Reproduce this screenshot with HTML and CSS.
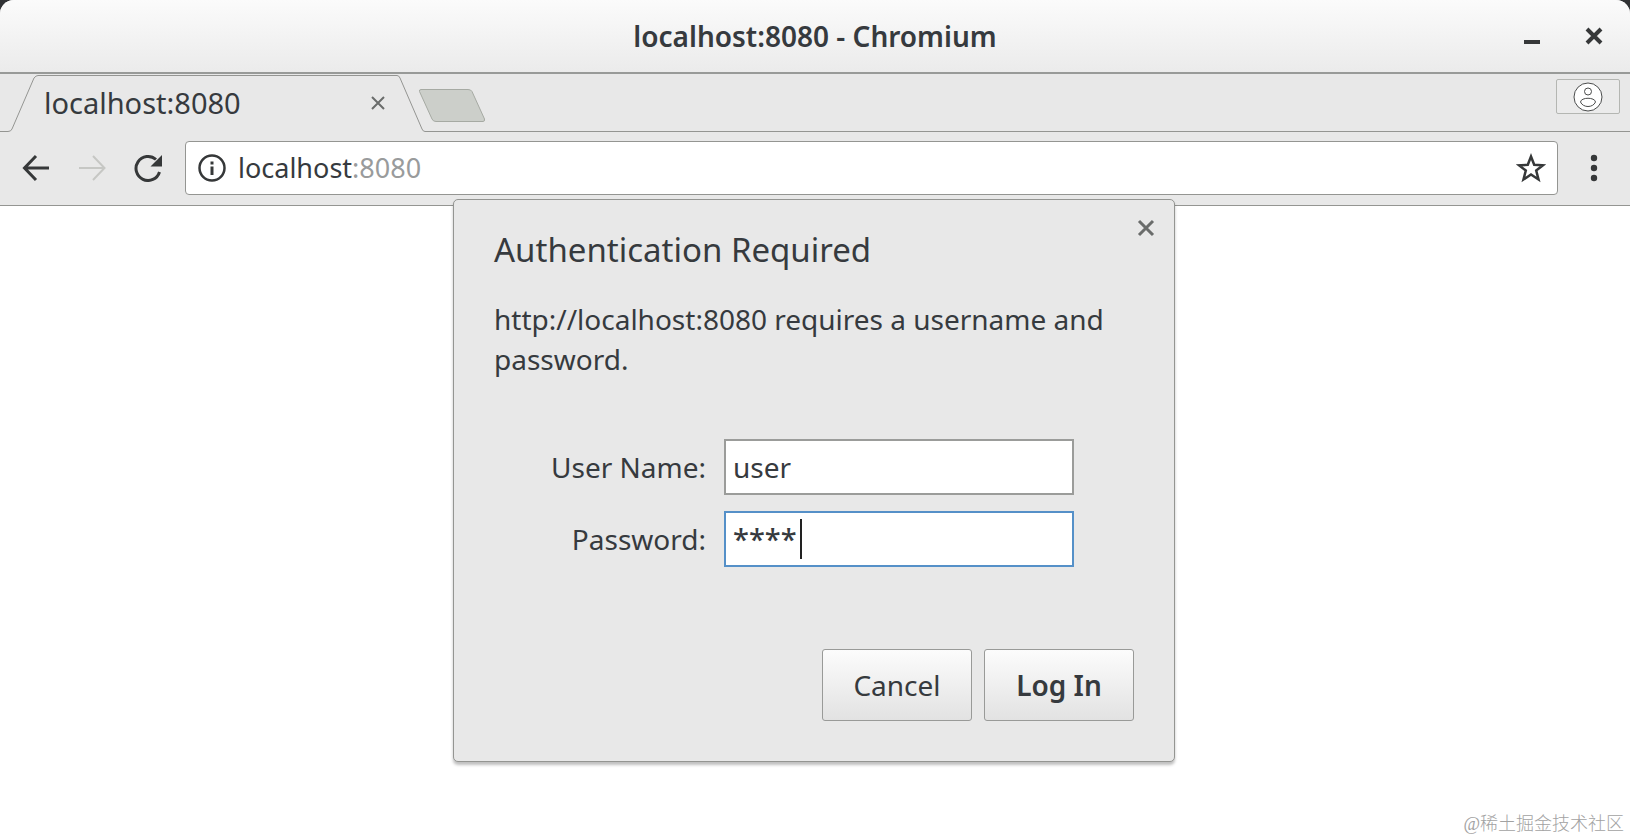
FILE: index.html
```html
<!DOCTYPE html>
<html lang="en">
<head>
<meta charset="utf-8">
<title>localhost:8080 - Chromium</title>
<link rel="stylesheet" href="styles.css">
</head>
<body>
<div class="window">
  <header class="titlebar">
    <h1 class="window-title">localhost:8080 - Chromium</h1>
    <div class="window-controls">
      <button class="icon-button" type="button" aria-label="Minimize">
        <svg width="24" height="24" viewBox="0 0 24 24"><rect x="4" y="16" width="16" height="4" fill="#363839"/></svg>
      </button>
      <button class="icon-button" type="button" aria-label="Close window">
        <svg width="24" height="24" viewBox="0 0 24 24"><path d="M5 5l14 14M19 5L5 19" fill="none" stroke="#363839" stroke-width="4"/></svg>
      </button>
    </div>
  </header>

  <nav class="tabstrip" aria-label="Tabs">
    <div class="tab">
      <svg class="tab-edge" width="38" height="58" viewBox="0 0 38 58"><path d="M0 57.500H8Q11 57.500 12 55L34 4Q36 1.500 38 1.500" fill="none" stroke="#949592" stroke-width="1"/></svg>
      <div class="tab-body">
        <span class="tab-title">localhost:8080</span>
        <button class="icon-button" type="button" aria-label="Close tab">
          <svg width="20" height="20" viewBox="0 0 20 20"><path d="M4 4l12 12M16 4L4 16" fill="none" stroke="#6a6c6b" stroke-width="2"/></svg>
        </button>
      </div>
      <svg class="tab-edge" width="28" height="58" viewBox="0 0 28 58"><path d="M0 1.500Q2 1.500 3 4L25 55Q26 57.500 28 57.500" fill="none" stroke="#949592" stroke-width="1"/></svg>
    </div>
    <div class="strip-rest">
      <button class="icon-button new-tab" type="button" aria-label="New tab">
        <svg width="68" height="34" viewBox="0 0 68 34"><path d="M3 1.500H50Q53 1.500 54 3.500L66.500 31Q67 33.500 65 33.500H18Q15 33.500 14 31L1.500 3.500Q1 1.500 3 1.500Z" fill="#cccfca" stroke="#a6aaa3"/></svg>
      </button>
      <button class="profile" type="button" aria-label="Profile">
        <svg width="30" height="30" viewBox="0 0 30 30" fill="none" stroke="#4a4c4c"><circle cx="15" cy="15" r="14" fill="#fff"/><circle cx="15" cy="9.500" r="3.500"/><path d="M7.500 20C8 15 22 15 22.500 20C20 26 10 26 7.500 20Z"/></svg>
      </button>
    </div>
  </nav>

  <div class="toolbar">
    <button class="icon-button" type="button" aria-label="Back">
      <svg width="28" height="28" viewBox="0 0 28 28"><path d="M27 14H3M14 2L2.500 14L14 26" fill="none" stroke="#363839" stroke-width="3"/></svg>
    </button>
    <button class="icon-button" type="button" aria-label="Forward" disabled>
      <svg width="28" height="28" viewBox="0 0 28 28"><path d="M1 14H26M15 2L26.500 14L15 26" fill="none" stroke="#c6c7c4" stroke-width="2"/></svg>
    </button>
    <button class="icon-button" type="button" aria-label="Reload">
      <svg width="28" height="28" viewBox="0 0 28 28"><path d="M25.500 18A12 12 0 1 1 22 5.500" fill="none" stroke="#363839" stroke-width="3"/><path d="M28 1V12.500H16.500Z" fill="#363839"/></svg>
    </button>
    <div class="omnibox">
      <svg width="28" height="28" viewBox="0 0 28 28"><circle cx="14" cy="14" r="12.500" fill="none" stroke="#363839" stroke-width="2.500"/><path d="M12.500 7.500h3v3h-3zM12.500 12.500h3v8.500h-3z" fill="#363839"/></svg>
      <div class="address" role="textbox" aria-label="Address">localhost<span class="port">:8080</span></div>
      <button class="icon-button" type="button" aria-label="Bookmark this page">
        <svg width="30" height="30" viewBox="0 0 30 30"><path d="M15 3.500L18.200 11.800L27 12.300L20.200 17.600L22.500 26.500L15 21.500L7.500 26.500L9.800 17.600L3 12.300L11.800 11.800Z" fill="none" stroke="#363839" stroke-width="2.500"/></svg>
      </button>
    </div>
    <button class="icon-button menu" type="button" aria-label="Menu">
      <svg width="8" height="28" viewBox="0 0 8 28" fill="#363839"><circle cx="4" cy="4" r="3.200"/><circle cx="4" cy="14" r="3.200"/><circle cx="4" cy="24" r="3.200"/></svg>
    </button>
  </div>

  <main class="page">
    <form class="dialog" role="dialog" aria-labelledby="dialog-title">
      <div class="dialog-head">
        <h2 class="dialog-title" id="dialog-title">Authentication Required</h2>
        <button class="icon-button" type="button" aria-label="Close dialog">
          <svg width="20" height="20" viewBox="0 0 20 20"><path d="M3 3l14 14M17 3L3 17" fill="none" stroke="#6a6c6b" stroke-width="3"/></svg>
        </button>
      </div>
      <p class="message">http://localhost:8080 requires a username and password.</p>
      <div class="fields">
        <label for="username">User Name:</label>
        <div class="field"><input id="username" type="text" value="user"></div>
        <label for="password">Password:</label>
        <div class="field focused"><input class="secret" id="password" type="text" value="****" autocomplete="off"><span class="caret"></span></div>
      </div>
      <div class="actions">
        <button class="action" type="button">Cancel</button>
        <button class="action primary" type="submit">Log In</button>
      </div>
    </form>
    <div class="watermark" lang="zh-CN">@稀土掘金技术社区</div>
  </main>
</div>
</body>
</html>
```

FILE: styles.css
```css
* {
  box-sizing: border-box;
}

body {
  margin: 0;
  background: #303234;
  color: #363a3e;
  font-family: "Noto Sans", "Open Sans", sans-serif;
  font-size: 28px;
  line-height: 40px;
}

button,
input {
  color: inherit;
  font: inherit;
}

svg {
  display: block;
}

.window {
  display: flex;
  flex-direction: column;
  min-height: 100vh;
  overflow: hidden;
  border-radius: 14px 14px 0 0;
  background: #e8e8e8;
}

.icon-button {
  flex: none;
  padding: 0;
  border: 0;
  background: none;
}

.titlebar {
  display: grid;
  grid-template-columns: 1fr auto 1fr;
  align-items: center;
  height: 74px;
  padding: 0 24px;
  border-bottom: 2px solid #989a98;
  background: linear-gradient(#fbfbfb, #ebebeb);
}

.window-title {
  grid-column: 2;
  margin: 0;
  font-size: 28px;
  font-weight: 600;
}

.window-controls {
  display: flex;
  justify-content: flex-end;
  gap: 38px;
}

.tabstrip {
  display: flex;
  height: 58px;
}

.tab {
  display: flex;
}

.tab-edge {
  height: 58px;
}

.tab-body {
  display: flex;
  align-items: center;
  justify-content: space-between;
  width: 359px;
  margin-top: 1px;
  padding: 0 9px 3px 6px;
  border-top: 1px solid #949592;
}

.tab-title {
  font-size: 29px;
}

.strip-rest {
  display: flex;
  flex: 1;
  align-items: flex-start;
  justify-content: space-between;
  padding: 5px 10px 0 0;
  border-bottom: 1px solid #949592;
}

.new-tab {
  margin: 9px 0 0 -7px;
}

.profile {
  display: flex;
  align-items: center;
  justify-content: center;
  width: 64px;
  height: 35px;
  padding: 0;
  border: 1px solid #b4b6b2;
  border-radius: 2px;
  background: #ebebeb;
}

.toolbar {
  display: flex;
  align-items: center;
  gap: 28px;
  height: 74px;
  padding: 0 32px 1px 22px;
  border-bottom: 1px solid #949592;
}

.omnibox {
  display: flex;
  flex: 1;
  align-items: center;
  gap: 12px;
  height: 54px;
  margin-left: -5px;
  padding: 0 11px 0 12px;
  border: 1px solid #949592;
  border-radius: 4px;
  background: #fff;
}

.address {
  flex: 1;
  font-size: 27px;
}

.port {
  color: #999b9c;
}

.menu {
  margin-left: 4px;
}

.page {
  position: relative;
  display: flex;
  flex: 1;
  flex-direction: column;
  align-items: center;
  padding-right: 2px;
  background: #fff;
}

.dialog {
  width: 722px;
  margin-top: -7px;
  padding: 14px 40px 40px;
  border: 1px solid #949592;
  border-radius: 5px;
  background: #e8e8e8;
  box-shadow: 0 3px 3px rgba(0, 0, 0, 0.25);
}

.dialog-head {
  display: flex;
  align-items: flex-start;
  justify-content: space-between;
  margin-right: -22px;
}

.dialog-head .icon-button {
  margin-top: 4px;
}

.dialog-title {
  margin: 12px 0 0;
  font-size: 33px;
  font-weight: 400;
  line-height: 48px;
}

.message {
  margin: 25px 0 0;
}

.fields {
  display: grid;
  grid-template-columns: 1fr 350px;
  gap: 16px 18px;
  align-items: center;
  margin: 60px 60px 0 0;
  text-align: right;
}

.field {
  display: flex;
  align-items: center;
  height: 56px;
  padding: 0 7px;
  border: 2px solid #9b9c9a;
  background: #fff;
}

.field.focused {
  border-color: #5590c8;
}

.field input {
  width: 100%;
  padding: 0;
  border: 0;
  outline: 0;
  background: none;
}

.field .secret {
  width: 67px;
  font-size: 29px;
  font-weight: 500;
}

.caret {
  width: 2px;
  height: 40px;
  background: #222;
}

.actions {
  display: flex;
  justify-content: flex-end;
  gap: 12px;
  margin-top: 82px;
}

.action {
  width: 150px;
  height: 72px;
  border: 1px solid #999a98;
  border-radius: 3px;
  background: linear-gradient(#fcfcfc, #e2e2e2);
}

.primary {
  font-weight: 600;
}

.watermark {
  position: absolute;
  right: 6px;
  bottom: 4px;
  color: #a2a2a2;
  font-family: "Liberation Serif", "Noto Sans CJK SC", serif;
  font-size: 18px;
  font-weight: 300;
  line-height: 24px;
}
```
